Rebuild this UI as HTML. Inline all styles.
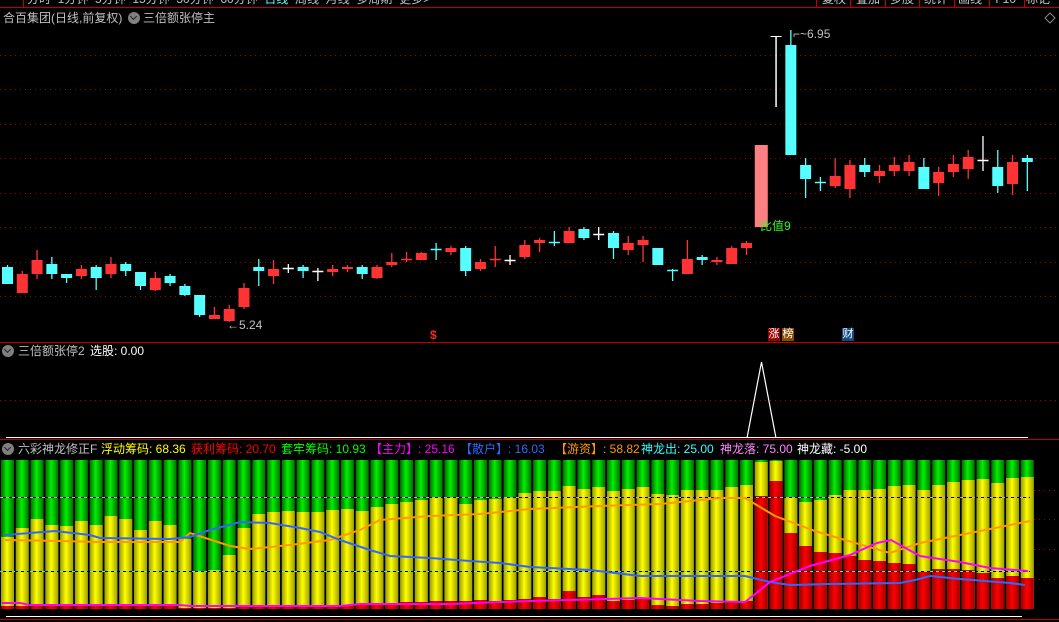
<!DOCTYPE html>
<html><head><meta charset="utf-8">
<style>
html,body{margin:0;padding:0;background:#000;width:1059px;height:622px;overflow:hidden;position:relative}
body{font-family:"Liberation Sans","Noto Sans CJK SC",sans-serif;font-size:12px}
.t{position:absolute;white-space:nowrap;line-height:14px}
svg{position:absolute;left:0;top:0}
.ic{position:absolute;width:12px;height:12px;border-radius:50%;background:#808080}
.ic:after{content:"";position:absolute;left:3px;top:2px;width:4px;height:4px;border-right:1.5px solid #222;border-bottom:1.5px solid #222;transform:rotate(45deg)}
.tag{position:absolute;width:12px;height:13px;font-size:11px;line-height:13px;text-align:center;color:#fff}
</style></head><body>
<svg id="s" width="1059" height="622" xmlns="http://www.w3.org/2000/svg">
<defs>
<linearGradient id="gG" x1="0" x2="1"><stop offset="0" stop-color="#006a00"/><stop offset="0.45" stop-color="#00f000"/><stop offset="1" stop-color="#007000"/></linearGradient>
<linearGradient id="gY" x1="0" x2="1"><stop offset="0" stop-color="#9a9a00"/><stop offset="0.45" stop-color="#ffff00"/><stop offset="1" stop-color="#a0a000"/></linearGradient>
<linearGradient id="gR" x1="0" x2="1"><stop offset="0" stop-color="#9a0000"/><stop offset="0.45" stop-color="#ff0000"/><stop offset="1" stop-color="#a00000"/></linearGradient>
</defs>
<line x1="0" y1="7.5" x2="1059" y2="7.5" stroke="#c00000"/>
<line x1="23.5" y1="0" x2="23.5" y2="7" stroke="#c00000"/>
<g stroke="#c00000"><line x1="816.5" y1="0" x2="816.5" y2="7"/><line x1="850.5" y1="0" x2="850.5" y2="7"/><line x1="885.5" y1="0" x2="885.5" y2="7"/><line x1="919.5" y1="0" x2="919.5" y2="7"/><line x1="954.5" y1="0" x2="954.5" y2="7"/><line x1="989.5" y1="0" x2="989.5" y2="7"/><line x1="1024.5" y1="0" x2="1024.5" y2="7"/></g>
<polygon points="1050,13 1055,18 1050,23 1045,18" fill="none" stroke="#888"/>
<g stroke="#a00000" stroke-dasharray="1,4">
<line x1="0" y1="55.5" x2="1059" y2="55.5"/><line x1="0" y1="89.5" x2="1059" y2="89.5"/><line x1="0" y1="124.5" x2="1059" y2="124.5"/><line x1="0" y1="158.5" x2="1059" y2="158.5"/><line x1="0" y1="193.5" x2="1059" y2="193.5"/><line x1="0" y1="227.5" x2="1059" y2="227.5"/><line x1="0" y1="262.5" x2="1059" y2="262.5"/><line x1="0" y1="296.5" x2="1059" y2="296.5"/>
<line x1="0" y1="400.5" x2="1059" y2="400.5"/>
<line x1="1034" y1="490.5" x2="1059" y2="490.5"/><line x1="1034" y1="519.5" x2="1059" y2="519.5"/><line x1="1034" y1="549.5" x2="1059" y2="549.5"/><line x1="1034" y1="579.5" x2="1059" y2="579.5"/>
</g>
<line x1="0" y1="342.5" x2="1059" y2="342.5" stroke="#c00000"/>
<line x1="0" y1="439.5" x2="1059" y2="439.5" stroke="#c00000"/>
<line x1="0" y1="619.5" x2="1059" y2="619.5" stroke="#c00000"/>
<line x1="6" y1="437.5" x2="1028" y2="437.5" stroke="#fff"/>
<polyline points="747,438 761.5,362 776,438" fill="none" stroke="#fff" stroke-width="1.2"/>
<line x1="6" y1="616.5" x2="1022" y2="616.5" stroke="#fff"/>
<g id="cd"></g>
<g id="bars"></g>
<g stroke-dasharray="3,3"><line x1="0" y1="497.5" x2="1030" y2="497.5" stroke="#d8a0d8"/><line x1="0" y1="571.5" x2="1030" y2="571.5" stroke="#60e0e0"/></g>
<g stroke="#000" stroke-dasharray="3,3" stroke-dashoffset="3"><line x1="0" y1="497.5" x2="1030" y2="497.5"/><line x1="0" y1="571.5" x2="1030" y2="571.5"/></g>
<polyline fill="none" stroke="#ff9900" stroke-width="2" points="5,540 60,541 100,542 180,542 190,533 230,546 250,549 290,545 330,540 360,530 380,520 430,516 480,514 530,509 600,506 660,504 720,498 745,498 775,516 815,531 845,540 890,553 920,543 970,533 1030,521"/>
<polyline fill="none" stroke="#3366ff" stroke-width="2" points="5,535 55,531 90,535 100,538 170,539 190,537 210,530 240,522 270,523 300,528 320,532 340,540 370,550 390,556 430,558 470,561 500,563 530,567 590,570 640,576 745,576 770,582 790,585 830,584 900,583 915,580 930,576 960,579 1010,583 1025,585"/>
<polyline fill="none" stroke="#ff00ff" stroke-width="2" points="2,603 20,603 30,605 180,605 190,606 340,606 360,604 450,604 500,602 530,601 570,600 640,598 700,601 745,602 770,582 810,566 850,555 877,543 891,540 920,556 960,562 990,568 1028,571"/>
</svg>
<div class="t" style="left:27px;top:-8px;color:#c0c0c0">分时 &nbsp;1分钟 &nbsp;5分钟 &nbsp;15分钟 &nbsp;30分钟 &nbsp;60分钟 &nbsp;<span style="color:#5ff">日线</span> &nbsp;周线 &nbsp;月线 &nbsp;多周期 &nbsp;更多&gt;</div>
<div class="t" style="left:822px;top:-8px;color:#c0c0c0">复权 &nbsp;&nbsp;叠加 &nbsp;&nbsp;多股 &nbsp;&nbsp;统计 &nbsp;&nbsp;画线 &nbsp;&nbsp;&nbsp;F10 &nbsp;&nbsp;标记</div>
<div class="t" style="left:3px;top:11px;color:#c0c0c0">合百集团(日线,前复权)</div>
<div class="ic" style="left:128px;top:12px"></div>
<div class="t" style="left:143px;top:11px;color:#c0c0c0">三倍额张停主</div>
<div class="t" style="left:227px;top:318px;color:#c0c0c0">←5.24</div>
<div class="t" style="left:793px;top:27px;color:#c0c0c0">⌐~6.95</div>
<div class="t" style="left:760px;top:219px;color:#2f2">比值9</div>
<div class="t" style="left:430px;top:328px;color:#f22;font-weight:bold">$</div>
<div class="tag" style="left:768px;top:328px;background:#900">涨</div>
<div class="tag" style="left:782px;top:328px;background:#8a4a00">榜</div>
<div class="tag" style="left:842px;top:328px;background:#134a80">财</div>
<div class="ic" style="left:2px;top:345px"></div>
<div class="t" style="left:18px;top:344px;color:#c0c0c0">三倍额张停2</div>
<div class="t" style="left:90px;top:344px;color:#fff">选股: 0.00</div>
<div class="ic" style="left:2px;top:443px"></div>
<div class="t" style="left:18px;top:442px;color:#c0c0c0">六彩神龙修正F</div>
<div class="t" style="left:101px;top:442px;color:#ff0">浮动筹码: 68.36</div>
<div class="t" style="left:191px;top:442px;color:#f00">获利筹码: 20.70</div>
<div class="t" style="left:281px;top:442px;color:#0f0">套牢筹码: 10.93</div>
<div class="t" style="left:370px;top:442px;color:#f0f">【主力】: 25.16</div>
<div class="t" style="left:460px;top:442px;color:#3366ff">【散户】: 16.03</div>
<div class="t" style="left:555px;top:442px;color:#ff9900">【游资】: 58.82</div>
<div class="t" style="left:641px;top:442px;color:#3ff">神龙出: 25.00</div>
<div class="t" style="left:720px;top:442px;color:#f8f">神龙落: 75.00</div>
<div class="t" style="left:797px;top:442px;color:#fff">神龙藏: -5.00</div>
<script>
var C=[["c",267,284,265,284],["r",274,293,271,293],["r",260,274,250,279],["c",264,274,257,279],["c",274,278,274,283],["r",269,276,265,279],["c",267,278,265,290],["r",264,274,257,278],["c",264,271,262,276],["c",272,286,272,290],["r",278,290,272,291],["c",276,283,274,286],["c",286,295,284,296],["c",295,315,295,317],["r",315,319,307,319],["r",309,321,305,322],["r",288,307,283,309],["c",267,271,259,286],["r",269,276,260,284],["w",268,268,264,273],["c",267,271,265,278],["w",271,271,268,281],["r",269,272,265,276],["r",267,269,265,272],["c",267,274,265,279],["r",267,278,265,279],["r",262,265,253,267],["r",259,259,252,262],["r",253,260,252,260],["c",249,249,243,260],["r",248,252,246,255],["c",248,271,246,276],["r",262,269,259,271],["r",259,259,246,267],["w",260,260,255,265],["r",245,257,240,259],["r",240,243,238,252],["c",242,242,231,246],["r",231,243,227,243],["c",229,238,227,240],["w",234,234,227,240],["c",233,248,231,259],["r",243,250,236,255],["r",240,245,236,262],["c",248,265,248,265],["c",270,270,269,281],["r",259,274,240,274],["c",257,260,255,265],["r",260,262,257,265],["r",248,264,246,264],["r",243,248,241,255],["p",145,227,145,227],["t",36,36,36,107],["c",45,155,30,155],["c",165,179,158,198],["c",182,182,177,191],["r",176,186,158,188],["r",165,189,160,198],["c",165,172,158,177],["r",171,176,165,183],["r",165,171,157,176],["r",162,171,155,176],["c",167,189,158,189],["r",172,183,167,196],["r",164,172,155,177],["r",157,169,150,179],["w",160,160,136,171],["c",167,186,150,193],["r",162,184,155,195],["c",158,162,155,191]];
var Y=[537,528,519,525,526,521,525,516,519,530,521,525,539,571,570,555,528,514,512,511,512,512,510,509,511,507,504,502,500,498,498,504,500,499,498,493,491,491,486,489,487,491,489,487,494,495,490,490,490,487,485,462,461,497,502,500,495,490,490,489,486,485,490,485,482,480,479,483,478,477];
var R=[606,606,606,606,606,606,606,606,606,606,606,606,608,608,608,608,606,606,606,606,606,606,606,605,605,603,603,602,602,601,601,601,600,601,600,599,597,599,591,597,595,601,600,599,605,606,604,604,603,601,601,496,481,533,546,552,553,556,560,561,563,564,572,569,569,570,573,578,576,578];
var col={r:"#ff3333",c:"#55ffff",w:"#ffffff",p:"#ff8080",t:"#ffffff"};
var h="",b="";
for(var i=0;i<70;i++){var x=7+i*14.78,d=C[i],c=col[d[0]];
 if(d[0]=="t"){h+='<line x1="'+(x-5)+'" y1="36.5" x2="'+(x+6)+'" y2="36.5" stroke="#fff"/><line x1="'+(x+0.5)+'" y1="36" x2="'+(x+0.5)+'" y2="107" stroke="#fff" stroke-width="1.5"/>';}
 else{h+='<line x1="'+(x+0.5)+'" y1="'+d[3]+'" x2="'+(x+0.5)+'" y2="'+d[4]+'" stroke="'+c+'" stroke-width="1.3"/>';
  var bh=d[2]-d[1];if(bh<2){h+='<line x1="'+(x-5)+'" y1="'+(d[1]+0.5)+'" x2="'+(x+6)+'" y2="'+(d[1]+0.5)+'" stroke="'+c+'" stroke-width="1.5"/>';}
  else{var w=(d[0]=="p")?13:11;h+='<rect x="'+(x-w/2+0.5)+'" y="'+d[1]+'" width="'+w+'" height="'+bh+'" fill="'+c+'"/>';}}
 var bx=x-6,bw=13;
 b+='<rect x="'+bx+'" y="460" width="'+bw+'" height="149" fill="url(#gG)"/>';
 b+='<rect x="'+bx+'" y="'+Y[i]+'" width="'+bw+'" height="'+(609-Y[i])+'" fill="url(#gY)"/>';
 b+='<rect x="'+bx+'" y="'+R[i]+'" width="'+bw+'" height="'+(609-R[i])+'" fill="url(#gR)"/>';
}
document.getElementById("cd").innerHTML=h;document.getElementById("bars").innerHTML=b;
</script>
</body></html>
